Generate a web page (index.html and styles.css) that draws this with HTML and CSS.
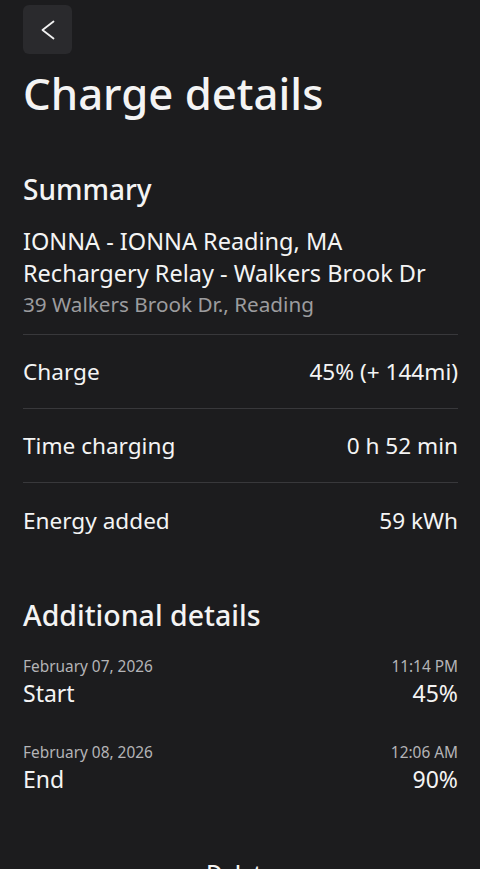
FILE: index.html
```html
<!DOCTYPE html>
<html lang="en">

<head>
    <meta charset="UTF-8">
    <title>Charge details</title>
    <link rel="stylesheet" href="styles.css">
</head>

<body>
    <div class="page">
        <div class="topbar">
            <button class="back" aria-label="Back">
                <svg width="14" height="20" viewBox="0 0 14 20">
                    <path d="M12.5 1.5 L1.5 10 L12.5 18.5" fill="none" stroke="#f2f2f2" stroke-width="1.8" stroke-linecap="round" stroke-linejoin="round"/>
                </svg>
            </button>
        </div>

        <h1 class="title">Charge details</h1>

        <h2 class="section">Summary</h2>
        <div class="station">
            <p>IONNA - IONNA Reading, MA</p>
            <p>Rechargery Relay - Walkers Brook Dr</p>
            <p class="addr">39 Walkers Brook Dr., Reading</p>
        </div>

        <ul class="stats">
            <li><span>Charge</span><span>45% (+ 144mi)</span></li>
            <li><span>Time charging</span><span>0 h 52 min</span></li>
            <li><span>Energy added</span><span>59 kWh</span></li>
        </ul>

        <h2 class="section more">Additional details</h2>
        <ul class="events">
            <li>
                <div class="meta"><span>February 07, 2026</span><span>11:14 PM</span></div>
                <div class="main"><span>Start</span><span>45%</span></div>
            </li>
            <li>
                <div class="meta"><span>February 08, 2026</span><span>12:06 AM</span></div>
                <div class="main"><span>End</span><span>90%</span></div>
            </li>
        </ul>

        <div class="footer">Delete</div>
    </div>
</body>

</html>
```

FILE: styles.css
```css
* {
    padding: 0;
    margin: 0;
    box-sizing: border-box;
}

body {
    background: #1c1c1e;
    color: #f4f4f4;
    font-family: "Noto Sans", "DejaVu Sans", sans-serif;
}

.page {
    padding: 5px 22px 0 23px;
}

.topbar {
    display: flex;
}

.back {
    width: 49px;
    height: 49px;
    border: none;
    border-radius: 6px;
    background: #2a2a2d;
    display: flex;
    align-items: center;
    justify-content: center;
}

.title {
    margin-top: 14px;
    font-size: 43.7px;
    line-height: 50px;
    font-weight: 500;
}

.section {
    margin-top: 54px;
    font-size: 28px;
    line-height: 34px;
    font-weight: 500;
}

.station {
    margin-top: 19px;
    font-size: 23.5px;
    line-height: 32px;
    padding-bottom: 15px;
    border-bottom: 1px solid #38383b;
}

.station .addr {
    line-height: 30px;
    color: #9c9c9f;
    font-size: 20.7px;
}

.stats {
    list-style: none;
}

.stats li {
    height: 74px;
    display: flex;
    align-items: center;
    justify-content: space-between;
    font-size: 22.6px;
    border-bottom: 1px solid #38383b;
}

.stats li:last-child {
    border-bottom: none;
}

.section.more {
    margin-top: 41px;
    font-size: 28.5px;
}

.events {
    list-style: none;
    margin-top: 24px;
}

.events li {
    height: 86px;
}

.meta,
.main {
    display: flex;
    justify-content: space-between;
}

.meta {
    font-size: 15.4px;
    line-height: 22px;
    color: #b4b4b7;
}

.main {
    font-size: 23px;
    line-height: 30px;
}

.footer {
    margin-top: 29px;
    text-align: center;
    font-size: 22px;
    font-weight: 500;
}
```
